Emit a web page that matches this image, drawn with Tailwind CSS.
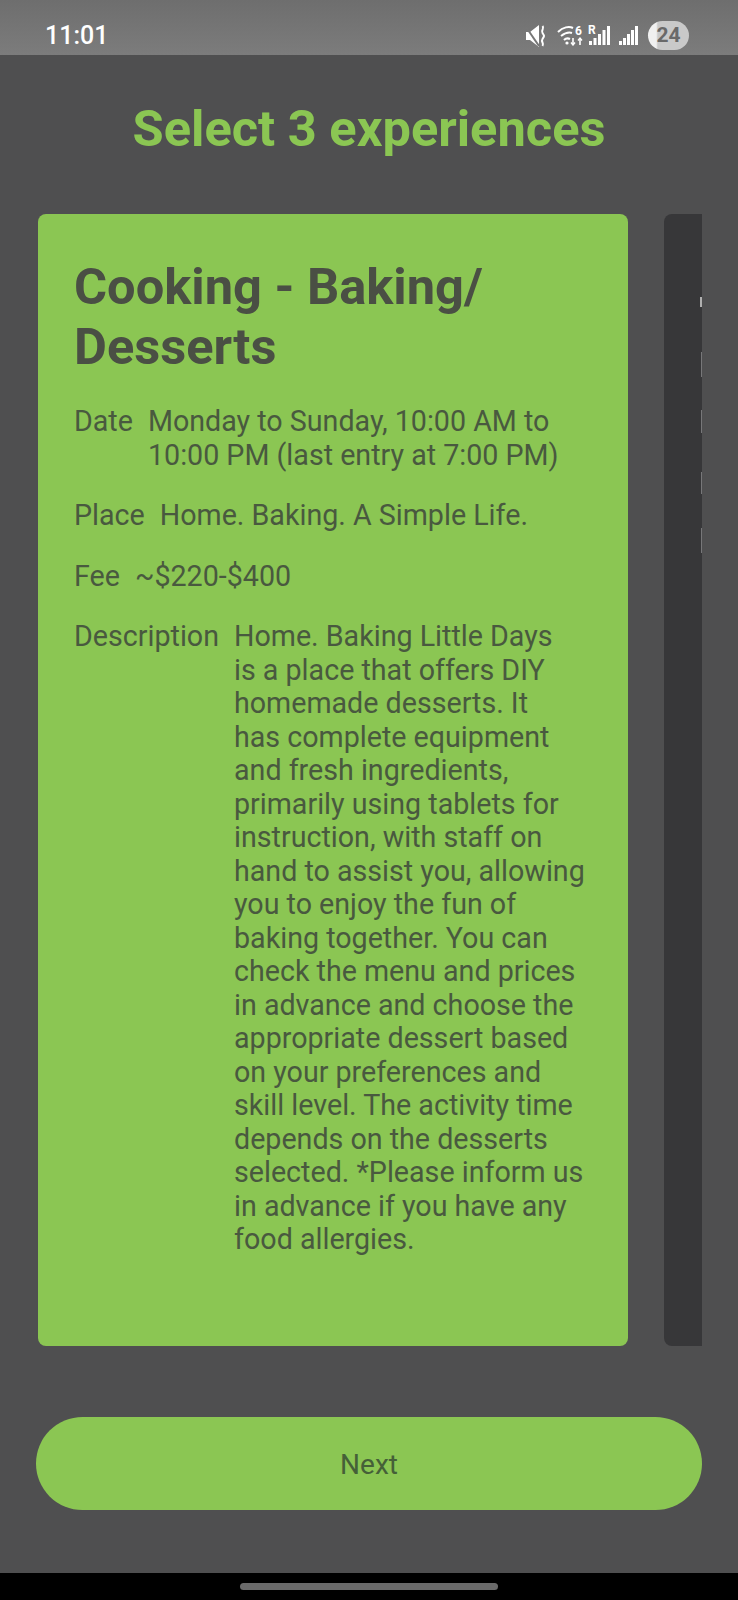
<!DOCTYPE html>
<html><head><meta charset="utf-8"><script src="https://cdn.jsdelivr.net/npm/@tailwindcss/browser@4"></script></head>
<body class="m-0">
<div class="w-[738px] h-[1600px] flex flex-col bg-black font-['Roboto',sans-serif] overflow-hidden">
  <div class="h-[55px] shrink-0 bg-gradient-to-b from-[#6e6e6e] to-[#7c7c7c] flex items-center pt-[16px] pl-[45px] pr-[49px] justify-between">
    <span class="text-white text-[25px] font-medium leading-none">11:01</span>
    <div class="flex items-center">
      <svg width="20" height="22" viewBox="0 0 20 22" class="mr-[11px]" fill="#fff"><path d="M0 7h4l9-7v22l-9-7H0z"/><path d="M0 2l13 19" stroke="#767676" stroke-width="2"/><path d="M16.500 1c2.500 3-2 4 0 7s2 3 0 6 2 4 0 7" stroke="#fff" stroke-width="2" fill="none"/></svg>
      <svg width="28" height="21" viewBox="0 0 28 21" fill="none" stroke="#fff" stroke-width="2" class="mr-[3px]"><path d="M1 7c5-5 11-6 15-4M4 11c4-3 8-4 11-3M7 15c2-2 4-2 6-1"/><circle cx="10" cy="18" r="1.600" fill="#fff" stroke="none"/><path d="M16 13v7M23 20v-7" stroke-width="1.600"/><path d="M14 17.500l2 2.500 2-2.500M21 15.500l2-2.500 2 2.500" stroke-width="1.400"/><text x="18" y="10" font-size="12" font-weight="700" fill="#fff" stroke="none" font-family="Roboto">6</text></svg>
      <div class="relative w-[22px] h-[21px] mr-[9px]"><span class="absolute -top-[1px] left-0 text-white text-[12px] leading-none font-bold">R</span><svg width="22" height="21" viewBox="0 0 22 21" fill="#fff" class="absolute top-0 left-0"><rect x="1" y="16" width="3" height="4"/><rect x="5.500" y="13" width="3" height="7"/><rect x="10" y="9" width="3" height="11"/><rect x="14.500" y="5" width="3" height="15"/><rect x="19" y="1" width="3" height="19"/></svg></div>
      <svg width="19" height="21" viewBox="0 0 19 21" fill="#fff" class="mr-[10px]"><rect x="0" y="16" width="3" height="4"/><rect x="4" y="13" width="3" height="7"/><rect x="8" y="9" width="3" height="11"/><rect x="12" y="5" width="3" height="15"/><rect x="16" y="1" width="3" height="19"/></svg>
      <div class="w-[41px] h-[29px] rounded-full bg-[linear-gradient(90deg,#f0f0f0_0%,#f0f0f0_20%,#c9c9c9_24%,#c9c9c9_100%)] flex items-center justify-center text-[#696969] text-[21px] font-bold leading-none">24</div>
    </div>
  </div>
  <div class="h-[1518px] shrink-0 bg-[#4f4f50] flex flex-col">
    <h1 class="text-center text-[#8bc653] text-[50.600px] font-bold leading-none mt-[49px] h-[56px]">Select 3 experiences</h1>
    <div class="flex mt-[54px] ml-[38px] w-[664px] overflow-hidden gap-[36px] shrink-0">
      <div class="w-[590px] shrink-0 h-[1132px] bg-[#8bc653] rounded-[8px] pl-[36px] pr-[42px] pt-[43px] text-[#4a4f44]">
        <h2 class="text-[50.600px] font-bold leading-[60px]">Cooking - Baking/ Desserts</h2>
        <div class="text-[28.650px] leading-[33.500px] mt-[28px] flex flex-col gap-[27px] text-[#49593f]">
          <div class="flex gap-[15px]"><span>Date</span><span>Monday to Sunday, 10:00 AM to 10:00 PM (last entry at 7:00 PM)</span></div>
          <div class="flex gap-[15px]"><span>Place</span><span>Home. Baking. A Simple Life.</span></div>
          <div class="flex gap-[15px]"><span>Fee</span><span>~$220-$400</span></div>
          <div class="flex gap-[15px]"><span>Description</span><span>Home. Baking Little Days<br>is a place that offers DIY<br>homemade desserts. It<br>has complete equipment<br>and fresh ingredients,<br>primarily using tablets for instruction, with staff on hand to assist you, allowing you to enjoy the fun of baking together. You can check the menu and prices in advance and choose the appropriate dessert based on your preferences and skill level. The activity time depends on the desserts selected. *Please inform us in advance if you have any food allergies.</span></div>
        </div>
      </div>
      <div class="relative w-[590px] shrink-0 h-[1132px] bg-[#373739] rounded-[8px]">
        <div class="absolute left-[36px] top-[83px] w-[2px] h-[10px] bg-[#b0b0b0]"></div>
        <div class="absolute left-[37px] top-[138px] w-[1px] h-[25px] bg-[#777779]"></div>
        <div class="absolute left-[37px] top-[196px] w-[1px] h-[23px] bg-[#777779]"></div>
        <div class="absolute left-[37px] top-[258px] w-[1px] h-[22px] bg-[#777779]"></div>
        <div class="absolute left-[37px] top-[314px] w-[1px] h-[25px] bg-[#777779]"></div>
      </div>
    </div>
    <button class="mt-[71px] ml-[36px] w-[666px] h-[93px] shrink-0 rounded-full bg-[#8bc653] text-[#456038] text-[28px] leading-none pt-[3px]">Next</button>
  </div>
  <div class="flex-1 bg-black flex justify-center pt-[10px]"><div class="w-[258px] h-[7px] rounded-full bg-[#6a6a6a]"></div></div>
</div>
</body></html>
